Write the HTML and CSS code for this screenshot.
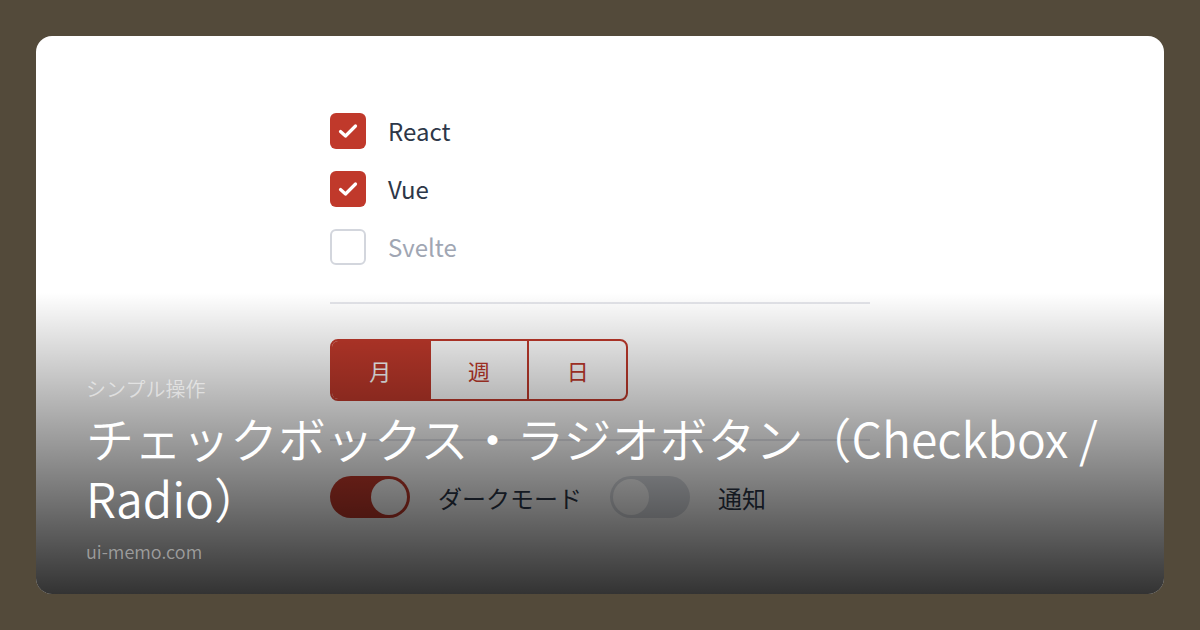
FILE: index.html
```html
<!DOCTYPE html>
<html lang="ja">
<head>
<meta charset="utf-8">
<title>チェックボックス・ラジオボタン</title>
<link rel="stylesheet" href="styles.css">
</head>
<body>
<div class="card">
  <div class="demo">
    <ul class="checks">
      <li class="check-row">
        <span class="box box-on">
          <svg viewBox="0 0 36 36" width="36" height="36"><polyline points="10.5,18.5 15.5,23 25.5,13" /></svg>
        </span>
        <span class="check-label">React</span>
      </li>
      <li class="check-row">
        <span class="box box-on">
          <svg viewBox="0 0 36 36" width="36" height="36"><polyline points="10.5,18.5 15.5,23 25.5,13" /></svg>
        </span>
        <span class="check-label">Vue</span>
      </li>
      <li class="check-row">
        <span class="box box-off"></span>
        <span class="check-label muted">Svelte</span>
      </li>
    </ul>

    <hr class="divider">

    <div class="segmented">
      <span class="seg seg-active">月</span>
      <span class="seg">週</span>
      <span class="seg">日</span>
    </div>

    <hr class="divider">

    <div class="toggles">
      <span class="toggle toggle-on"><span class="knob"></span></span>
      <span class="toggle-label">ダークモード</span>
      <span class="toggle"><span class="knob"></span></span>
      <span class="toggle-label">通知</span>
    </div>
  </div>

  <div class="caption">
    <p class="kicker">シンプル操作</p>
    <h1 class="title">チェックボックス・ラジオボタン（Checkbox / Radio）</h1>
    <p class="site">ui-memo.com</p>
  </div>
</div>
</body>
</html>
```

FILE: styles.css
```css
* {
  box-sizing: border-box;
}

html, body {
  margin: 0;
  padding: 0;
}

body {
  width: 1200px;
  height: 630px;
  padding: 36px;
  background: #534a3a;
  font-family: "Noto Sans CJK JP", "Noto Sans", sans-serif;
  overflow: hidden;
}

.card {
  position: relative;
  width: 1128px;
  height: 558px;
  background: #ffffff;
  border-radius: 16px;
  overflow: hidden;
  display: flex;
  justify-content: center;
}

/* demo widgets */
.demo {
  width: 540px;
  padding-top: 77px;
  display: flex;
  flex-direction: column;
}

.checks {
  list-style: none;
  margin: 0;
  padding: 0;
  display: flex;
  flex-direction: column;
  gap: 22px;
}

.check-row {
  display: flex;
  align-items: center;
  gap: 22px;
  height: 36px;
}

.box {
  width: 36px;
  height: 36px;
  border-radius: 6px;
  flex: none;
  display: block;
}

.box-on {
  background: #c0392b;
}

.box-on svg {
  display: block;
}

.box-on polyline {
  fill: none;
  stroke: #ffffff;
  stroke-width: 3.2;
  stroke-linecap: round;
  stroke-linejoin: round;
}

.box-off {
  border: 2px solid #d3d6dd;
  background: #ffffff;
}

.check-label {
  font-size: 24px;
  line-height: 36px;
  color: #2d3748;
}

.check-label.muted {
  color: #a0a6b3;
}

.divider {
  border: 0;
  border-top: 2px solid #e4e5ea;
  margin: 37px 0 35px;
}

.segmented {
  display: flex;
  width: 298px;
  height: 62px;
  border: 2px solid #c0392b;
  border-radius: 8px;
  overflow: hidden;
}

.seg {
  flex: 1;
  display: flex;
  align-items: center;
  justify-content: center;
  font-size: 22px;
  color: #c0392b;
}

.seg + .seg {
  border-left: 2px solid #c0392b;
}

.seg-active {
  background: #c0392b;
  color: #ffffff;
}

.segmented + .divider {
  margin-top: 38px;
}

.toggles {
  display: flex;
  align-items: center;
  gap: 28px;
}

.toggle {
  position: relative;
  width: 80px;
  height: 42px;
  border-radius: 21px;
  background: #dcdfe4;
  flex: none;
}

.knob {
  position: absolute;
  top: 3px;
  left: 3px;
  width: 36px;
  height: 36px;
  border-radius: 50%;
  background: #ffffff;
}

.toggle-on {
  background: #c0392b;
}

.toggle-on .knob {
  left: 41px;
}

.toggle-label {
  font-size: 24px;
  color: #2d3748;
}

/* caption overlay */
.caption {
  position: absolute;
  inset: 0;
  padding: 0 50px 30px;
  display: flex;
  flex-direction: column;
  justify-content: flex-end;
  background: linear-gradient(to bottom, rgba(0, 0, 0, 0) 46%, rgba(0, 0, 0, 0.8) 100%);
}

.kicker {
  margin: 0 0 4px;
  font-size: 20px;
  font-weight: 350;
  line-height: 28px;
  color: rgba(255, 255, 255, 0.55);
}

.title {
  margin: 0 0 11px;
  font-size: 48px;
  font-weight: 350;
  line-height: 60px;
  color: #ffffff;
}

.site {
  margin: 0;
  font-size: 18px;
  font-weight: 350;
  line-height: 26px;
  color: rgba(255, 255, 255, 0.45);
}
```
